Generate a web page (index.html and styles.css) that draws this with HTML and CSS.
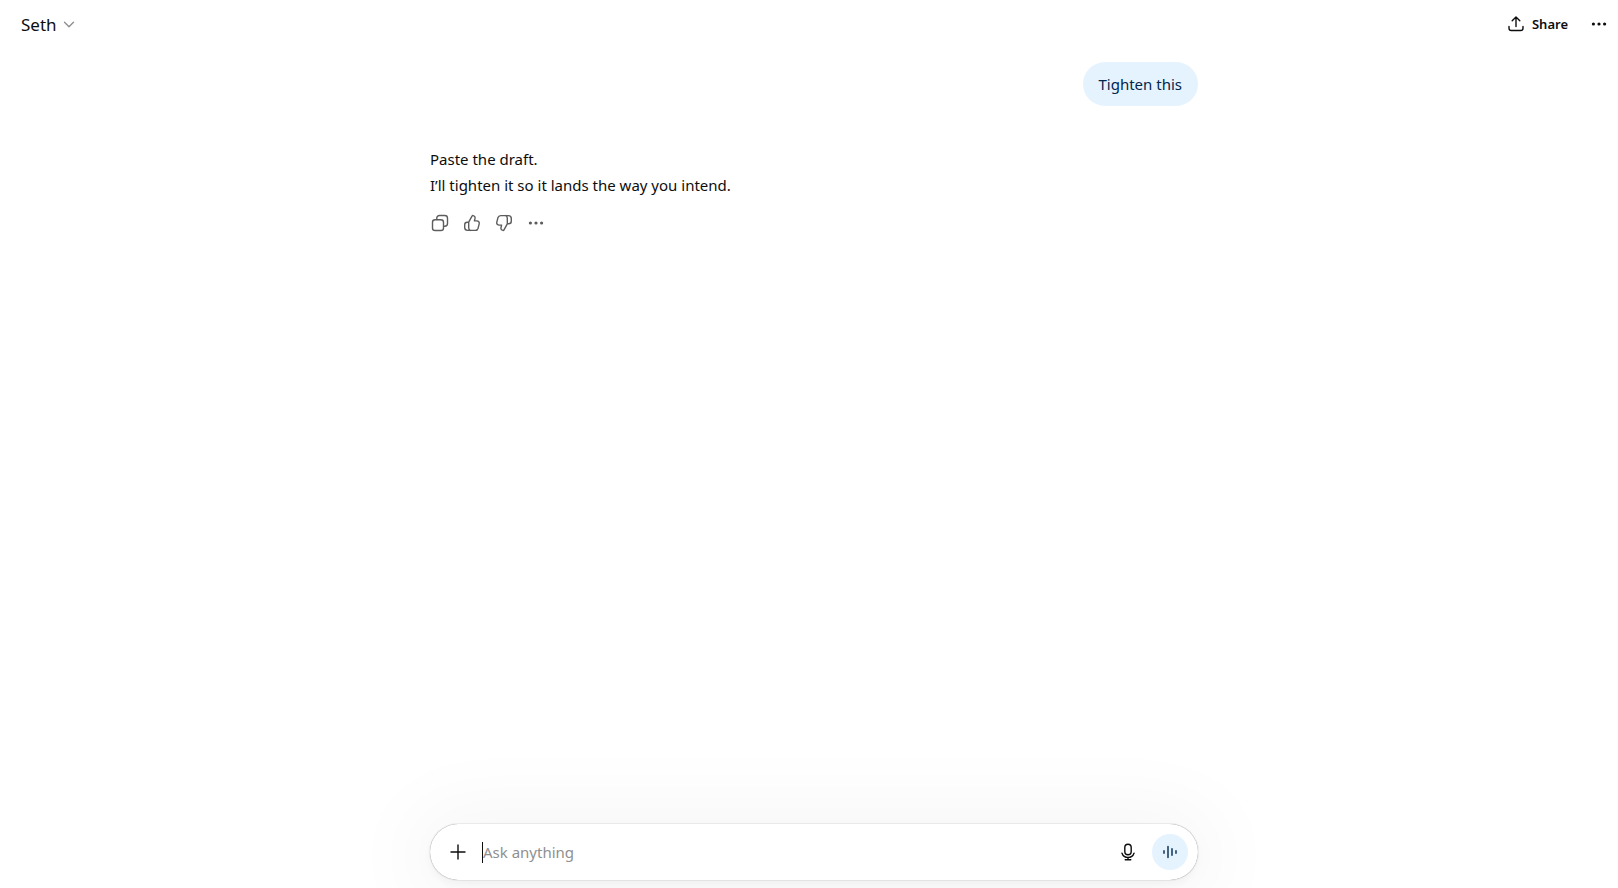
FILE: index.html
```
<!DOCTYPE html>
<html lang="en">
<head>
  <meta charset="UTF-8">
  <meta name="viewport" content="width=device-width, initial-scale=1.0">
  <title>Seth</title>
  <link rel="stylesheet" href="styles.css">
</head>
<body>

<!-- Header -->
<header class="header">
  <button class="model-btn" type="button">
    Seth
    <svg width="16" height="16" viewBox="0 0 16 16"><path d="M3.500 6.300 8 10.800l4.500-4.500"/></svg>
  </button>
  <div class="header-actions">
    <button class="share-btn" type="button">
      <svg width="20" height="20" viewBox="0 0 20 20"><path d="M10 12.500V3.300M6.200 6.800 10 3l3.800 3.800M3 12.500v1.700c0 1.500.9 2.300 2.300 2.300h9.400c1.400 0 2.300-.8 2.300-2.300v-1.700"/></svg>
      Share
    </button>
    <button class="icon-btn" type="button" aria-label="More options">
      <svg class="dots" width="20" height="20" viewBox="0 0 20 20"><circle cx="4.400" cy="10" r="1.600"/><circle cx="10" cy="10" r="1.600"/><circle cx="15.600" cy="10" r="1.600"/></svg>
    </button>
  </div>
</header>

<!-- Conversation -->
<main class="thread">
  <div class="bubble">Tighten this</div>

  <div class="reply">
    <p>Paste the draft.<br>I’ll tighten it so it lands the way you intend.</p>
    <div class="reply-actions">
      <button class="icon-btn" type="button" aria-label="Copy">
        <svg width="20" height="20" viewBox="0 0 20 20"><rect x="2.500" y="6.800" width="11" height="10.700" rx="2.600"/><path d="M6.800 6.500V5.200c0-1.600 1-2.700 2.700-2.700h5.300c1.700 0 2.700 1.100 2.700 2.700v5.300c0 1.700-1 2.700-2.700 2.700h-1"/></svg>
      </button>
      <button class="icon-btn" type="button" aria-label="Good response">
        <svg width="20" height="20" viewBox="0 0 20 20"><path d="M6.700 9.200 10 3.100c.2-.4.6-.6 1.100-.5 1.500.3 2.200 1.500 1.900 2.900l-.6 2.400h2.400c1.700 0 2.800 1.300 2.400 2.900l-1.100 4.400c-.4 1.400-1.300 2.200-2.800 2.200H5.600c-1.800 0-2.900-1.100-2.900-2.800v-2.900c0-1.600 1-2.500 2.600-2.500zM6.700 9.200v5.600c0 1.200.6 2.100 1.500 2.600"/></svg>
      </button>
      <button class="icon-btn" type="button" aria-label="Bad response">
        <svg width="20" height="20" viewBox="0 0 20 20"><path d="M13.300 10.800 10 16.900c-.2.400-.6.600-1.100.5-1.500-.3-2.200-1.500-1.900-2.900l.6-2.400H5.200c-1.700 0-2.800-1.300-2.400-2.900l1.100-4.400c.4-1.400 1.300-2.200 2.800-2.200h7.700c1.800 0 2.900 1.100 2.900 2.800v2.900c0 1.600-1 2.500-2.600 2.500zM13.300 10.800V5.200c0-1.200-.6-2.100-1.500-2.600"/></svg>
      </button>
      <button class="icon-btn" type="button" aria-label="More actions">
        <svg class="dots" width="20" height="20" viewBox="0 0 20 20"><circle cx="4.400" cy="10" r="1.600"/><circle cx="10" cy="10" r="1.600"/><circle cx="15.600" cy="10" r="1.600"/></svg>
      </button>
    </div>
  </div>
</main>

<!-- Message box -->
<form class="composer">
  <button class="round-btn" type="button" aria-label="Add files">
    <svg width="20" height="20" viewBox="0 0 20 20"><path d="M10 3v14M3 10h14"/></svg>
  </button>
  <span class="caret"></span>
  <input type="text" placeholder="Ask anything" aria-label="Ask anything">
  <button class="round-btn" type="button" aria-label="Dictate">
    <svg width="20" height="20" viewBox="0 0 20 20"><rect x="6.800" y="2.200" width="6.400" height="10.600" rx="3.200"/><path d="M4 11.200c.9 2.600 3.100 4.200 6 4.200s5.100-1.600 6-4.200M10 15.400v2.300M7.200 17.700h5.600"/></svg>
  </button>
  <button class="round-btn voice-btn" type="button" aria-label="Use voice">
    <svg width="20" height="20" viewBox="0 0 20 20"><path d="M4 8.700v2.600M8 4.500v11M12 6.800v6.400M16 8.700v2.600"/></svg>
  </button>
</form>

</body>
</html>
```

FILE: styles.css
```
* {
  box-sizing: border-box;
}
body {
  display: flex;
  flex-direction: column;
  min-height: 100vh;
  margin: 0;
  padding-left: 10px;
  font-family: "Segoe UI", "Noto Sans", sans-serif;
  font-size: 15px;
  line-height: 26px;
  color: #0d0d0d;
  background-color: #fff;
  overflow-x: hidden;
}
button {
  display: flex;
  align-items: center;
  justify-content: center;
  padding: 0;
  border: none;
  background: none;
  color: inherit;
  font-family: inherit;
  cursor: pointer;
}
svg {
  flex-shrink: 0;
  fill: none;
  stroke: currentColor;
  stroke-width: 1.4;
  stroke-linecap: round;
  stroke-linejoin: round;
}
.dots {
  fill: currentColor;
  stroke: none;
}

/* Header */
.header {
  display: flex;
  align-items: center;
  justify-content: space-between;
  height: 48px;
  padding: 0 3px 0 11px;
}
.model-btn {
  gap: 4px;
  font-size: 17px;
}
.model-btn svg {
  color: #8f8f8f;
}
.header-actions {
  display: flex;
  align-items: center;
  gap: 15px;
}
.share-btn {
  gap: 6px;
  font-size: 13px;
  font-weight: 600;
}
.icon-btn {
  width: 32px;
  height: 32px;
}

/* Conversation */
.thread {
  display: flex;
  flex: 1;
  flex-direction: column;
  width: 100%;
  max-width: 768px;
  margin: 0 auto;
  padding-top: 14px;
}
.bubble {
  align-self: flex-end;
  padding: 9px 16px;
  border-radius: 22px;
  background-color: #e5f3ff;
  color: #00284d;
}
.reply {
  margin-top: 40px;
}
.reply p {
  margin: 0;
}
.reply-actions {
  display: flex;
  margin: 9px 0 0 -6px;
  color: #5d5d5d;
}

/* Message box */
.composer {
  display: flex;
  align-items: center;
  width: 100%;
  max-width: 768px;
  height: 56px;
  margin: 0 auto 8px;
  padding: 10px;
  border-radius: 28px;
  background-color: #fff;
  box-shadow: 0 0 1px rgba(0, 0, 0, 0.6), 0 4px 8px rgba(0, 0, 0, 0.04), 0 4px 80px 20px rgba(0, 0, 0, 0.04);
}
.composer input {
  flex: 1;
  min-width: 0;
  padding: 0;
  border: none;
  outline: none;
  background: none;
  color: inherit;
  font-family: inherit;
  font-size: 15px;
}
.composer input::placeholder {
  color: #8f8f8f;
}
.caret {
  width: 1px;
  height: 21px;
  margin-left: 6px;
  background-color: #0d0d0d;
}
.round-btn {
  width: 36px;
  height: 36px;
  border-radius: 50%;
}
.voice-btn {
  margin-left: 6px;
  background-color: #e5f3ff;
  color: #00284d;
}
```
